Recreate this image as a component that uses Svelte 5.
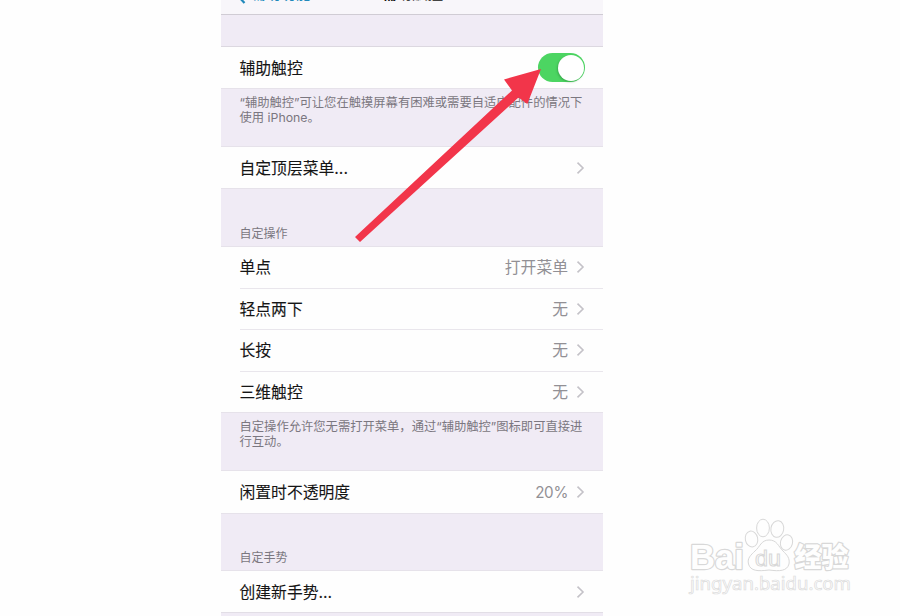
<script>
  const actions = [
    { label: '单点', value: '打开菜单' },
    { label: '轻点两下', value: '无' },
    { label: '长按', value: '无' },
    { label: '三维触控', value: '无' }
  ];
</script>

{#snippet chevron()}
  <svg class="chevron" width="9" height="14" viewBox="0 0 9 14"><path d="M1.500 1.600 7 7 1.500 12.400" /></svg>
{/snippet}

{#snippet row(label, value)}
  <div class="row">
    <span class="label">{label}</span>
    {#if value}<span class="value" class:latin={value.endsWith('%')}>{value}</span>{/if}
    {@render chevron()}
  </div>
{/snippet}

<div class="page">
  <main class="phone">
    <header class="nav">
      <div class="back">
        <svg width="10" height="16" viewBox="0 0 10 16"><path d="M8.500 1 2 8l6.500 7" /></svg>
        <span>辅助功能</span>
      </div>
      <span class="title">辅助触控</span>
    </header>
    <div class="spacer"></div>
    <section class="group">
      <div class="row">
        <span class="label">辅助触控</span>
        <span class="toggle"><i></i></span>
      </div>
    </section>
    <p class="note">“辅助触控”可让您在触摸屏幕有困难或需要自适应配件的情况下<br />使用 iPhone。</p>
    <section class="group">{@render row('自定顶层菜单...')}</section>
    <h2 class="tall">自定操作</h2>
    <section class="group four">
      {#each actions as a}
        {@render row(a.label, a.value)}
      {/each}
    </section>
    <p class="note">自定操作允许您无需打开菜单，通过“辅助触控”图标即可直接进<br />行互动。</p>
    <section class="group last">{@render row('闲置时不透明度', '20%')}</section>
    <h2>自定手势</h2>
    <section class="group">{@render row('创建新手势...')}</section>
    <div class="end"></div>
  </main>

  <svg class="arrow" width="190" height="176" viewBox="0 0 190 176">
    <path d="M189 3 152 13.500l8 11L3 171l5 5L166.500 31.500l8.800 6.500z" />
  </svg>

  <svg class="mark" width="180" height="95" viewBox="0 0 180 95">
    <g class="outline">
      <text class="heavy" x="10" y="58.500" font-size="35" textLength="54" lengthAdjust="spacingAndGlyphs">Bai</text>
      <ellipse cx="71.500" cy="29" rx="6.200" ry="8" transform="rotate(-12 71.500 29)" />
      <ellipse cx="83" cy="18" rx="6.400" ry="8.800" />
      <ellipse cx="97.300" cy="19" rx="6.400" ry="8.400" transform="rotate(10 97.300 19)" />
      <ellipse cx="106.500" cy="32.500" rx="6" ry="7.800" transform="rotate(15 106.500 32.500)" />
      <path d="M89 30c-8 0-9 7-14 11-4 4-8 7-6.500 13 2 7 9 7.500 20.500 6 11 1.500 18 1 20-6 1-6-2-9-6-13-5-5-6-11-14-11z" />
      <text x="75" y="55.500" font-size="22" textLength="26" lengthAdjust="spacingAndGlyphs">du</text>
      <text class="heavy" x="114.500" y="57" font-size="27" textLength="54" lengthAdjust="spacingAndGlyphs">经验</text>
      <text class="url" x="10" y="80" font-size="18" textLength="161" lengthAdjust="spacingAndGlyphs">jingyan.baidu.com</text>
    </g>
  </svg>
</div>

<style>
  :global(body) { margin: 0; overflow: hidden; }
  .page {
    position: relative;
    width: 900px;
    height: 616px;
    overflow: hidden;
    background: #fefefe;
    font-family: Inter, "Noto Sans CJK SC", sans-serif;
  }
  .phone {
    display: flex;
    flex-direction: column;
    width: 382px;
    height: 616px;
    margin-left: 221px;
    overflow: hidden;
    background: #f0ebf5;
  }
  .nav {
    display: flex;
    align-items: flex-end;
    flex: none;
    box-sizing: border-box;
    height: 15px;
    padding: 0 0 10px 15px;
    border-bottom: 1px solid #d0ccd4;
    background: #f8f6fa;
    font-size: 15px;
    line-height: 20px;
    white-space: nowrap;
  }
  .back { display: flex; align-items: center; gap: 4.5px; width: 145px; color: #2189bb; }
  .back svg { flex: none; margin-top: 3px; fill: none; stroke: #2189bb; stroke-width: 2.2; }
  .title { color: #111; font-weight: 600; font-size: 15.5px; }
  .spacer { flex: none; height: 31px; border-bottom: 1px solid #dcd8e0; }
  .group { display: flex; flex-direction: column; flex: none; height: 41px; background: #fefefe; }
  .group.four { height: 165px; }
  .group.last { height: 42px; }
  .row {
    display: flex;
    align-items: center;
    flex: 1;
    min-height: 0;
    box-sizing: border-box;
    margin-left: 18.5px;
    padding-right: 18px;
    font-size: 15.8px;
    line-height: 24px;
    color: #151515;
  }
  .row + .row { border-top: 1px solid #e9e6ec; }
  .label { flex: 1; padding-top: 2px; -webkit-text-stroke: 0.1px #151515; }
  .value { margin-right: 8px; padding-top: 2px; color: #929095; }
  .value.latin { font-size: 15.2px; letter-spacing: -0.3px; }
  .chevron { flex: none; fill: none; stroke: #c4c2c8; stroke-width: 1.6; }
  .toggle {
    display: flex;
    justify-content: flex-end;
    box-sizing: border-box;
    width: 47px;
    height: 29px;
    padding: 1.5px;
    border-radius: 15px;
    background: #4cd562;
  }
  .toggle i { width: 26px; height: 26px; border-radius: 50%; background: #fff; box-shadow: -1px 1px 2px #2b8a3c80; }
  .note {
    flex: none;
    box-sizing: border-box;
    height: 59px;
    margin: 0;
    padding: 6px 0 0 18.5px;
    border-top: 1px solid #e6e2ea;
    border-bottom: 1px solid #e6e2ea;
    font-size: 12.3px;
    line-height: 15px;
    color: #7b7780;
    white-space: nowrap;
  }
  h2 {
    display: flex;
    align-items: flex-end;
    flex: none;
    box-sizing: border-box;
    height: 58px;
    margin: 0;
    padding: 0 0 4px 18.5px;
    border-top: 1px solid #e6e2ea;
    border-bottom: 1px solid #e6e2ea;
    font-size: 12px;
    line-height: 17px;
    font-weight: 400;
    color: #7b7780;
  }
  .tall { height: 59px; }
  .end { flex: 1; border-top: 1px solid #e2dee6; }
  .arrow { position: absolute; left: 352px; top: 66px; fill: #f2354a; }
  .mark { position: absolute; left: 680px; top: 510px; }
  .outline { fill: #fefefe; stroke: #d8d8d8; stroke-width: 1; font-family: "Liberation Sans", "Noto Sans CJK SC", sans-serif; }
  .heavy { font-weight: 900; stroke-width: 2.4; paint-order: stroke; stroke-linejoin: round; }
  .url { font-family: "Noto Sans", sans-serif; stroke: #dcdcdc; stroke-width: 0.7; }
</style>
